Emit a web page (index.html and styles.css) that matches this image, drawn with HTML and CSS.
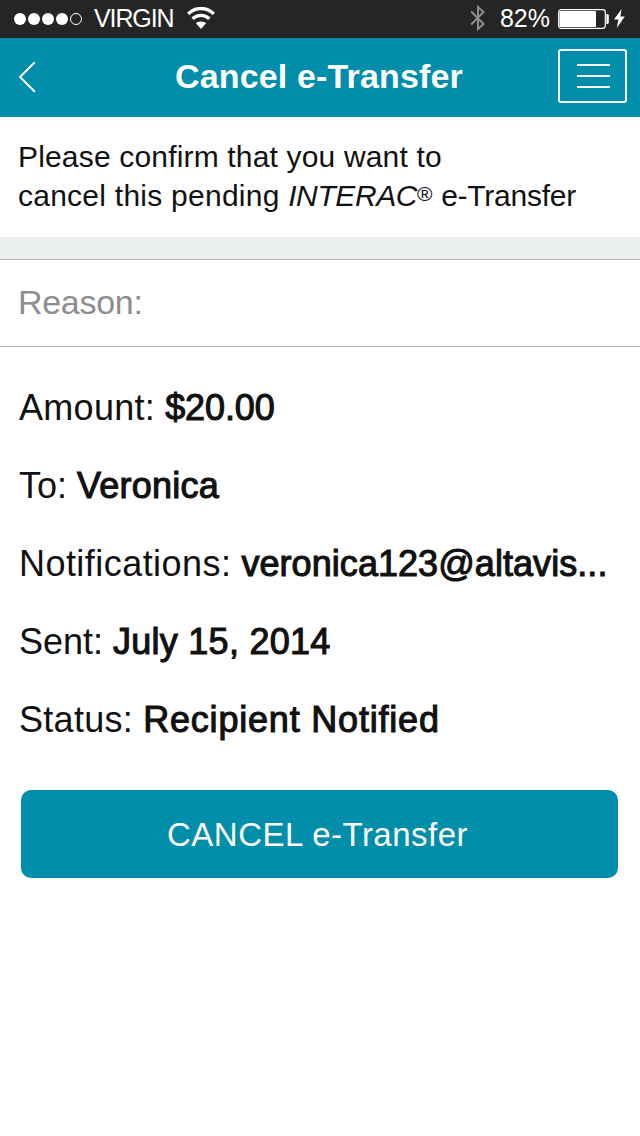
FILE: index.html
```
<!DOCTYPE html>
<html lang="en">
<head>
  <meta charset="utf-8">
  <title>Cancel e-Transfer</title>
  <link rel="stylesheet" href="styles.css">
</head>
<body>

<!-- Phone status bar -->
<div class="status-bar">
  <svg class="signal" width="70" height="16" viewBox="0 0 70 16">
    <circle cx="6" cy="8" r="6"/>
    <circle cx="20" cy="8" r="6"/>
    <circle cx="34" cy="8" r="6"/>
    <circle cx="48" cy="8" r="6"/>
    <circle class="empty" cx="62" cy="8" r="5.5"/>
  </svg>
  <span class="carrier">VIRGIN</span>
  <svg class="wifi" width="28" height="22" viewBox="0 0 28 22">
    <path class="arc" d="M1.2 6.9a18.1 18.1 0 0 1 25.6 0M5.6 11.8a11.9 11.9 0 0 1 16.8 0"/>
    <path d="M14 22l-4.9-5.6q0-1.4 4.9-1.8q4.9.4 4.9 1.8z"/>
  </svg>
  <span class="spacer"></span>
  <svg class="bluetooth" width="16" height="26" viewBox="0 0 16 26">
    <path d="M1.2 6.5L13.5 19L8 24V2l5.5 5L1.2 19.5"/>
  </svg>
  <span class="percent">82%</span>
  <svg class="battery" width="52" height="20" viewBox="0 0 52 20">
    <rect class="shell" x="0.7" y="0.7" width="46.6" height="18.6" rx="2.5"/>
    <rect x="1.5" y="2" width="36.5" height="16" rx="1"/>
    <path d="M48.4 5h.8q1.6 0 1.6 1.5v7q0 1.5-1.6 1.5h-.8z"/>
  </svg>
  <svg class="bolt" width="11" height="19" viewBox="0 0 11 19">
    <path d="M7.6 0L0 10.6h4.4L2.8 19L10.8 7.6H6.4z"/>
  </svg>
</div>

<!-- Title bar -->
<div class="header">
  <a class="back" href="#" aria-label="Back">
    <svg width="18" height="32" viewBox="0 0 18 32">
      <path d="M16.8 1.2L2 16L16.8 30.8"/>
    </svg>
  </a>
  <h1>Cancel e-Transfer</h1>
  <button class="menu" type="button" aria-label="Menu">
    <span></span>
    <span></span>
    <span></span>
  </button>
</div>

<p class="intro"><span class="line1">Please confirm that you want to</span><br><span class="line2">cancel this pending <em>INTERAC</em><span class="reg">®</span></span> <span class="product">e-Transfer</span></p>

<div class="reason">Reason:</div>

<!-- Transfer details -->
<div class="details">
  <div class="row"><span class="label">Amount:</span> <span class="value amount">$20.00</span></div>
  <div class="row">To: <span class="value">Veronica</span></div>
  <div class="row"><span class="label-long">Notifications:</span> <span class="value email">veronica123@altavis...</span></div>
  <div class="row">Sent: <span class="value">July 15, 2014</span></div>
  <div class="row"><span class="label">Status:</span> <span class="value state">Recipient Notified</span></div>
</div>

<button class="cancel" type="button">CANCEL e-Transfer</button>

</body>
</html>
```
FILE: styles.css
```
* {
  box-sizing: border-box;
}

body {
  margin: 0;
  background-color: #ffffff;
  color: #111111;
  font-family: "Liberation Sans", Arial, sans-serif;
}

/* status bar */
.status-bar {
  display: flex;
  align-items: center;
  height: 38px;
  padding: 0 14px;
  background-color: #252525;
  color: #ffffff;
  font-size: 25px;
  line-height: 36px;
}

.status-bar svg {
  fill: #ffffff;
  flex: none;
}

.signal .empty {
  fill: none;
  stroke: #ffffff;
  stroke-width: 1;
}

.carrier {
  margin-left: 10px;
  margin-bottom: 2px;
  letter-spacing: -1.1px;
}

.wifi {
  margin-left: 13px;
  margin-bottom: 2px;
}

.wifi .arc {
  fill: none;
  stroke: #ffffff;
  stroke-width: 3.4;
}

.spacer {
  flex: 1;
}

.status-bar .bluetooth {
  margin-bottom: 2px;
  fill: none;
  stroke: #8c8c8c;
  stroke-width: 2;
}

.percent {
  margin-left: 14px;
  margin-bottom: 2px;
}

.battery {
  margin-left: 8px;
  margin-bottom: 1px;
}

.battery .shell {
  fill: none;
  stroke: #ffffff;
  stroke-width: 1.2;
}

.bolt {
  margin-left: 4px;
  margin-right: 1px;
  margin-bottom: 2px;
}

/* title bar */
.header {
  display: flex;
  align-items: center;
  justify-content: space-between;
  height: 79px;
  padding: 0 13px 3px 18px;
  background-color: #008eab;
  color: #ffffff;
}

.back {
  width: 62px;
  height: 30px;
}

.back svg {
  fill: none;
  stroke: #ffffff;
  stroke-width: 2;
}

h1 {
  margin: 0;
  font-size: 34px;
  font-weight: bold;
  letter-spacing: 0.15px;
}

.menu {
  display: flex;
  flex-direction: column;
  align-items: center;
  justify-content: center;
  gap: 9px;
  width: 69px;
  height: 54px;
  padding: 0 0 0 2px;
  background: none;
  border: 2px solid #ffffff;
  border-radius: 3px;
}

.menu span {
  width: 33px;
  height: 2px;
  background-color: #ffffff;
}

.intro {
  height: 120px;
  margin: 0;
  padding: 20px 18px 0;
  font-size: 30px;
  line-height: 39px;
  white-space: nowrap;
}

.line1 {
  letter-spacing: 0.17px;
}

.line2 {
  letter-spacing: 0.25px;
}

.line2 em {
  letter-spacing: -0.4px;
}

.reg {
  font-size: 21px;
  line-height: 1;
  vertical-align: 5px;
}

.product {
  letter-spacing: -0.25px;
}

/* grey strip sits above the field */
.reason {
  height: 110px;
  padding-left: 18px;
  border-top: 22px solid #ebeff0;
  border-bottom: 1px solid #b5b5b5;
  box-shadow: inset 0 1px #b5b5b5;
  color: #8e8e8e;
  font-size: 34px;
  letter-spacing: -0.3px;
  line-height: 86px;
}

.details {
  padding: 22px 19px 0;
}

.row {
  height: 78px;
  font-size: 36px;
  line-height: 78px;
  white-space: nowrap;
}

.label {
  letter-spacing: 0.3px;
}

.label-long {
  letter-spacing: 0.45px;
}

/* medium weight, between regular and bold */
.value {
  letter-spacing: 0.25px;
  -webkit-text-stroke: 1.1px #111111;
}

.amount {
  letter-spacing: -0.1px;
}

.email {
  letter-spacing: 0.06px;
}

.state {
  letter-spacing: 0.8px;
}

.cancel {
  display: block;
  width: 597px;
  height: 88px;
  margin: 31px 0 0 21px;
  padding: 2px 4px 0 0;
  background-color: #008eab;
  border: none;
  border-radius: 10px;
  color: #ffffff;
  font-family: inherit;
  font-size: 33px;
  letter-spacing: 0.48px;
}
```
